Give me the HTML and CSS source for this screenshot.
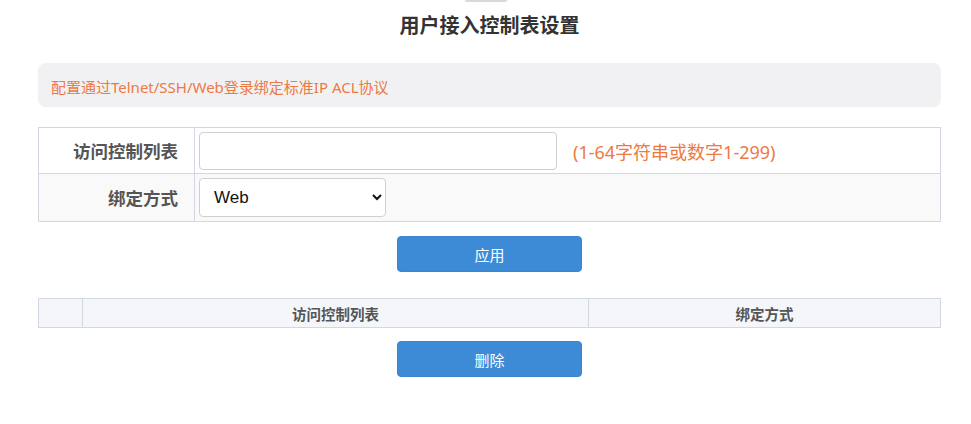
FILE: index.html
```html
<!DOCTYPE html>
<html lang="zh-CN">
<head>
<meta charset="utf-8">
<link rel="stylesheet" href="styles.css">
</head>
<body>
<div class="page">
  <div class="topbar"></div>
  <h1 class="title">用户接入控制表设置</h1>
  <div class="notice">配置通过Telnet/SSH/Web登录绑定标准IP ACL协议</div>
  <div class="form">
    <div class="row">
      <div class="label">访问控制列表</div>
      <div class="field">
        <input class="text-input" type="text">
        <span class="hint">(1-64字符串或数字1-299)</span>
      </div>
    </div>
    <div class="row alt">
      <div class="label">绑定方式</div>
      <div class="field">
        <select class="select">
          <option>Web</option>
          <option>Telnet</option>
          <option>SSH</option>
        </select>
      </div>
    </div>
  </div>
  <div class="actions"><button class="btn">应用</button></div>
  <div class="list">
    <div class="col c1"></div>
    <div class="col c2">访问控制列表</div>
    <div class="col c3">绑定方式</div>
  </div>
  <div class="actions del"><button class="btn">删除</button></div>
</div>
</body>
</html>
```
FILE: styles.css
```css
* { box-sizing: border-box; }
body {
  margin: 0;
  background: #fff;
  font-family: "Noto Sans", "Noto Sans CJK SC", sans-serif;
  color: #333;
}
.page {
  margin: 0 30px 0 38px;
  display: flex;
  flex-direction: column;
}
.topbar {
  align-self: center;
  width: 42px;
  height: 2px;
  margin-left: -8px;
  background: #d8d8d8;
  border-radius: 0 0 3px 3px;
}
.title {
  margin: 10px 0 0;
  text-align: center;
  font-size: 20px;
  line-height: 28px;
  font-weight: 700;
  color: #333;
}
.notice {
  margin-top: 23px;
  height: 44px;
  display: flex;
  align-items: center;
  padding: 2px 13px 0;
  background: #f1f1f3;
  border-radius: 8px;
  color: #ec7a43;
  font-size: 15px;
}
.form {
  margin-top: 20px;
  border: 1px solid #d3d7e0;
  border-bottom: none;
}
.row {
  display: grid;
  grid-template-columns: 156px 1fr;
  border-bottom: 1px solid #d3d7e0;
  height: 46px;
}
.row.alt {
  background: #f9f9fa;
  height: 48px;
}
.label {
  border-right: 1px solid #d3d7e0;
  display: flex;
  align-items: center;
  justify-content: flex-end;
  padding-right: 16px;
  font-size: 17.5px;
  font-weight: 700;
  color: #555;
}
.field {
  display: flex;
  align-items: center;
  padding-left: 4px;
}
.text-input {
  width: 358px;
  height: 38px;
  border: 1px solid #d0d0d0;
  border-radius: 4px;
  background: #fff;
  font-size: 16px;
  padding: 0 10px;
}
.hint {
  margin-left: 16px;
  color: #ec7a43;
  font-size: 18px;
}
.select {
  width: 187px;
  height: 39px;
  border: 1px solid #d0d0d0;
  border-radius: 4px;
  background: #fff;
  font-family: "Liberation Sans", "Noto Sans", sans-serif;
  font-size: 17px;
  color: #111;
  padding: 0 10px;
}
.actions {
  display: flex;
  justify-content: center;
  margin-top: 14px;
  padding-left: 8px;
}
.btn {
  width: 185px;
  height: 36px;
  background: #3d8bd6;
  border: 1px solid #3a86cf;
  border-radius: 4px;
  color: #fff;
  font-family: "Noto Sans CJK SC", sans-serif;
  font-size: 15px;
  margin-left: -8px;
}
.list {
  margin-top: 26px;
  display: grid;
  grid-template-columns: 44px 506px 1fr;
  height: 30px;
  border: 1px solid #d3d7e0;
  background: #f5f6fa;
}
.col {
  display: flex;
  align-items: center;
  justify-content: center;
  font-size: 14.5px;
  font-weight: 700;
  color: #555;
}
.c1, .c2 { border-right: 1px solid #d3d7e0; }
.actions.del { margin-top: 13px; }
```
